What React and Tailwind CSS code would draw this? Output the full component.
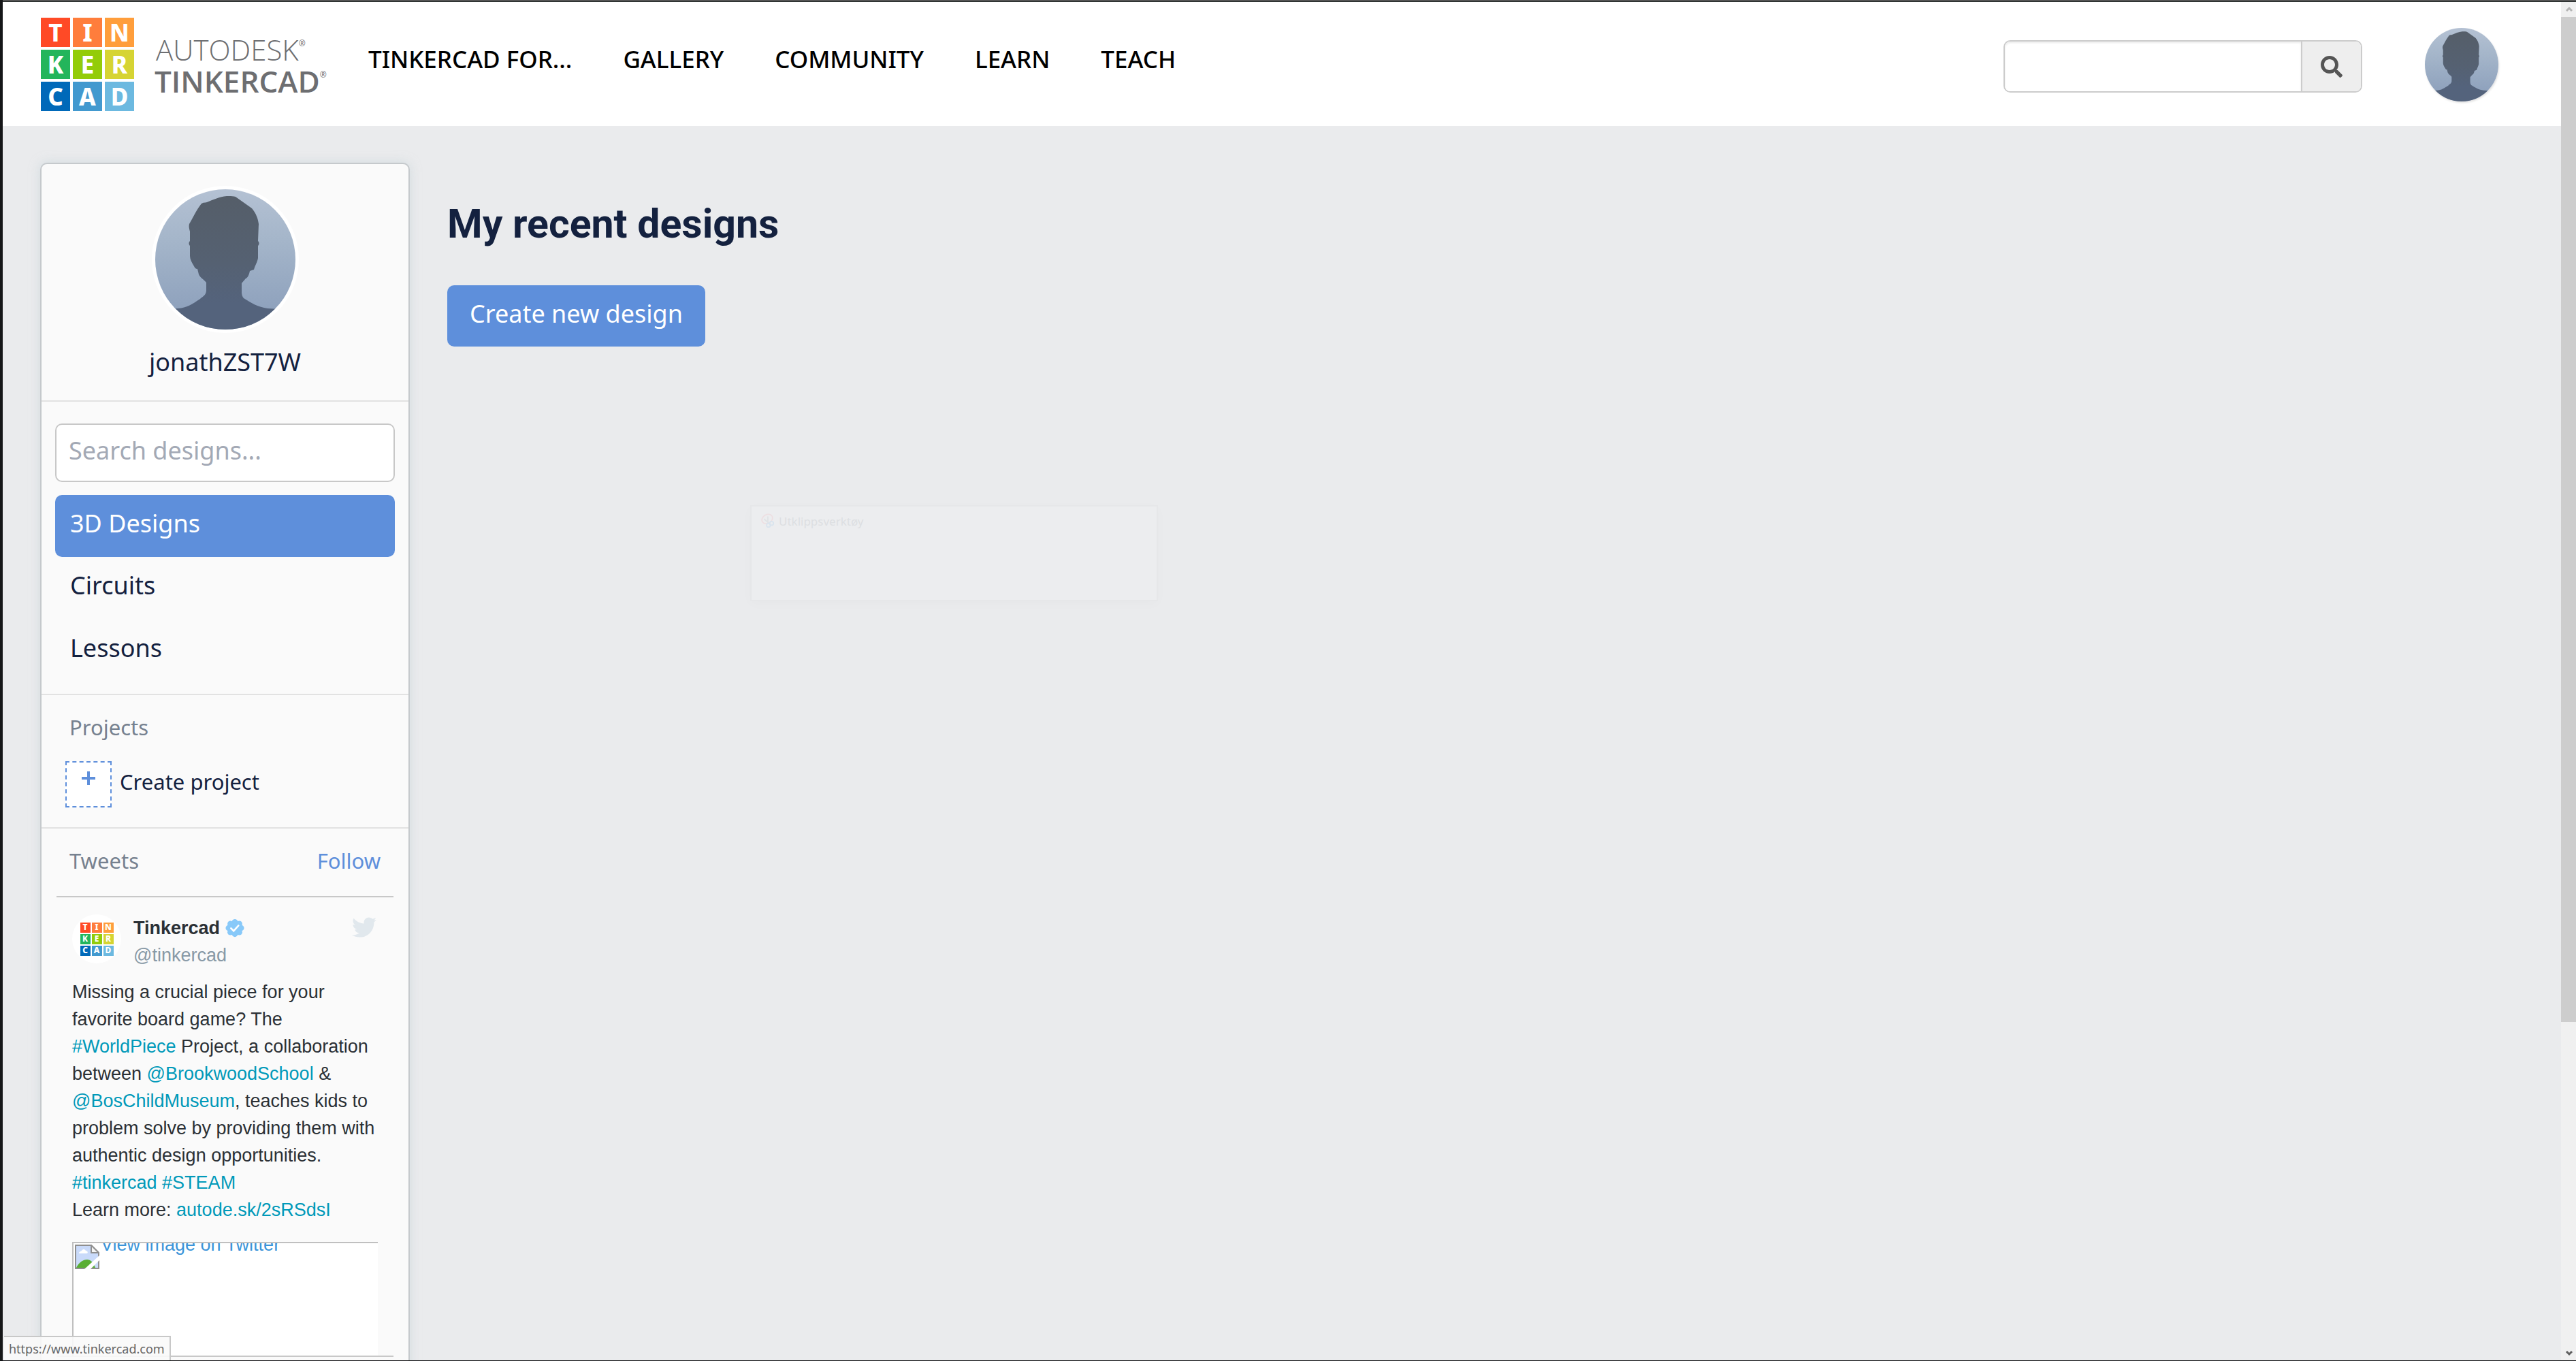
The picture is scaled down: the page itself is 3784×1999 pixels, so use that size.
import React from "react";
import { FaSearch, FaTwitter } from "react-icons/fa";

const SANS = "font-['Noto_Sans','Open_Sans',sans-serif]";
const ARIAL = "font-['Liberation_Sans',Arial,sans-serif]";

const TILES = [
  ["T", "bg-[#ff4a26]"],
  ["I", "bg-[#ff7d3c]"],
  ["N", "bg-[#ff9e3c]"],
  ["K", "bg-[#23b55b]"],
  ["E", "bg-[#93cc09]"],
  ["R", "bg-[#d6d433]"],
  ["C", "bg-[#0069b9]"],
  ["A", "bg-[#4299cf]"],
  ["D", "bg-[#6cb9e0]"],
];

function TileLogo({ grid, tile }) {
  return (
    <span className={`grid shrink-0 grid-cols-3 ${grid}`}>
      {TILES.map(([letter, color]) => (
        <span key={letter} className={`flex items-center justify-center font-extrabold text-white ${color} ${tile}`}>
          {letter}
        </span>
      ))}
    </span>
  );
}

function Avatar({ id, className }) {
  return (
    <svg viewBox="0 0 206 206" className={`rounded-full ${className}`} role="img" aria-label="User avatar">
      <defs>
        <linearGradient id={`${id}-sky`} x1="0" y1="0" x2="0" y2="1">
          <stop offset="0" stopColor="#b4c1d3" />
          <stop offset="0.35" stopColor="#a5b6ca" />
          <stop offset="0.85" stopColor="#8fa2bd" />
        </linearGradient>
        <linearGradient id={`${id}-body`} x1="0" y1="0" x2="0" y2="1">
          <stop offset="0" stopColor="#555e69" />
          <stop offset="0.5" stopColor="#556172" />
          <stop offset="0.8" stopColor="#54637c" />
        </linearGradient>
      </defs>
      <rect width="206" height="206" fill={`url(#${id}-sky)`} />
      <path
        fill={`url(#${id}-body)`}
        d="M108 10c4 0 7 0 10 1 8 6 16 11 24 17 6 7 9 15 10 23l-1 25c2 2 2 5 0 7v18c-1 6-4 10-6 17l-6 2c-1 5-3 10-6 11l-6 7v13c0 4 1 7 3 9 11 7 21 13 35 15l17 1v30H18v-30l16-1c12-1 20-6 32-14 4-4 9-5 9-13v-11c-4-5-9-7-11-12l-2-8c-3 0-4-2-5-4-3-5-6-10-6-15V83c-2-2-2-5 0-7V62c-1-4-2-7-1-11 6-10 10-20 18-30 3-2 5-1 8-2 10-4 18-8 29-9z"
      />
    </svg>
  );
}

function VerifiedBadge() {
  return (
    <svg viewBox="0 0 64 64" className="size-7" role="img" aria-label="Verified account">
      <g fill="#88c9f9">
        <circle cx="32" cy="32" r="23" />
        <circle cx="32" cy="12" r="10" />
        <circle cx="32" cy="52" r="10" />
        <circle cx="11" cy="32" r="10" />
        <circle cx="53" cy="32" r="10" />
        <circle cx="17" cy="18" r="10" />
        <circle cx="47" cy="18" r="10" />
        <circle cx="17" cy="46" r="10" />
        <circle cx="47" cy="46" r="10" />
      </g>
      <path d="M19 33l9 9 16-18" fill="none" stroke="#fff" strokeWidth="6" strokeLinecap="round" />
    </svg>
  );
}

function BrokenImage() {
  return (
    <svg viewBox="0 0 36 36" className="size-9 shrink-0" aria-hidden="true">
      <path d="M1 1h23l11 11v23H1z" fill="#c9dafa" stroke="#8f8f8f" strokeWidth="2" />
      <path d="M6 13c0-3 3-3 4-4 2-3 5-2 6 0 3 0 4 4 1 4z" fill="#fff" />
      <path d="M2 34c4-8 10-12 16-12 5 0 9 4 12 12z" fill="#5aae35" />
      <path d="M24 1v11h11z" fill="#f4f4f4" stroke="#8f8f8f" strokeWidth="2" />
      <path d="M14 36L36 16v7L23 36z" fill="#fff" />
    </svg>
  );
}

const NAV = ["TINKERCAD FOR...", "GALLERY", "COMMUNITY", "LEARN", "TEACH"];

function Header() {
  return (
    <header className="flex h-[182px] items-start bg-white pl-14">
      <a href="#home" className="mt-[23px] flex shrink-0 items-start">
        <TileLogo grid="gap-1" tile="size-[43px] text-[35px] leading-none" />
        <span className="ml-[30px] mt-6 flex w-[258px] flex-col text-[#6d6e71]">
          <span className="flex items-start pl-0.5 font-['Open_Sans',sans-serif] text-[42px] leading-[46px] font-light">
            AUTODESK<sup className="top-0 mt-2 text-xs leading-none font-normal">®</sup>
          </span>
          <span className="flex items-start font-['Open_Sans',sans-serif] text-[44px] leading-[46px] font-semibold">
            TINKERCAD<sup className="top-0 mt-2 text-xs leading-none font-normal">®</sup>
          </span>
        </span>
      </a>
      <nav className="mt-[60px] ml-14 flex gap-[75px] text-[35px] leading-[48px] font-medium text-black">
        {NAV.map((item) => (
          <a key={item} href="#nav" className="whitespace-nowrap">
            {item}
          </a>
        ))}
      </nav>
      <form className="mt-14 ml-auto flex h-[77px] w-[527px] rounded-[10px] border-2 border-[#ccc]" onSubmit={(e) => e.preventDefault()}>
        <input
          type="text"
          aria-label="Search Tinkercad"
          className="min-w-0 flex-1 rounded-l-lg bg-white px-5 text-3xl shadow-[inset_0_2px_3px_rgba(0,0,0,0.09)] outline-none"
        />
        <button type="submit" aria-label="Search" className="flex w-[88px] items-center justify-center rounded-r-lg border-l-2 border-[#ccc] bg-[#eee] text-[#555]">
          <FaSearch className="size-8" />
        </button>
      </form>
      <button type="button" aria-label="Account" className="mt-[38px] mr-[92px] ml-[92px] rounded-full shadow-[1px_2px_3px_rgba(0,0,0,0.12)]">
        <Avatar id="account" className="size-[108px]" />
      </button>
    </header>
  );
}

function Hash({ children }) {
  return (
    <a href="#tweet" className="text-[#0099b9]">
      {children}
    </a>
  );
}

function Tweet() {
  return (
    <article className={`px-[23px] pt-[25px] text-[27px] text-[#2b3035] ${ARIAL}`}>
      <div className="flex items-start">
        <span className={`flex size-[72px] shrink-0 items-center justify-center rounded-full bg-white ${SANS}`}>
          <TileLogo grid="gap-0.5" tile="size-[15px] text-xs leading-none" />
        </span>
        <div className="ml-[18px] leading-10">
          <div className="flex items-center gap-2 font-bold">
            Tinkercad <VerifiedBadge />
          </div>
          <div className="text-[#8899a6]">@tinkercad</div>
        </div>
        <FaTwitter className="mt-px mr-0.5 ml-auto size-9 text-[#e1e8ed]" />
      </div>
      <p className="mt-[14px] leading-10">
        Missing a crucial piece for your
        <br />
        favorite board game? The
        <br />
        <Hash>#WorldPiece</Hash> Project, a collaboration
        <br />
        between <Hash>@BrookwoodSchool</Hash> &amp;
        <br />
        <Hash>@BosChildMuseum</Hash>, teaches kids to
        <br />
        problem solve by providing them with
        <br />
        authentic design opportunities.
        <br />
        <Hash>#tinkercad</Hash> <Hash>#STEAM</Hash>
        <br />
        Learn more: <Hash>autode.sk/2sRSdsI</Hash>
      </p>
      <a href="#photo" className="mt-[27px] flex h-[167px] items-start overflow-hidden border-t-2 border-l-2 border-[#c0c0c0] bg-white pt-0.5 pl-0.5 text-[#3b94d9]">
        <BrokenImage />
        <span className="-mt-4 ml-0.5 leading-8">View image on Twitter</span>
      </a>
    </article>
  );
}

function Sidebar() {
  return (
    <aside className="w-[543px] shrink-0 rounded-t-[10px] border-2 border-b-0 border-[#c5c9cc] bg-[#fafafa] text-[#14213f] shadow-[0_0_16px_rgba(190,205,212,0.55)]">
      <section className="flex flex-col items-center border-b-2 border-[#e2e2e2] pt-8">
        <Avatar id="profile" className="size-[216px] border-[5px] border-white" />
        <h2 className="mt-[19px] mb-8 text-4xl leading-[48px]">jonathZST7W</h2>
      </section>
      <section className="border-b-2 border-[#e2e2e2] px-5 pt-8 pb-[19px] text-4xl">
        <input
          type="text"
          placeholder="Search designs..."
          aria-label="Search designs"
          className="mb-[19px] h-[86px] w-full rounded-[10px] border-2 border-[#c8c8c8] bg-white px-[18px] pb-2 placeholder:text-[#a3a9b5]"
        />
        <nav className="flex flex-col">
          <a href="#3d" className="h-[91px] rounded-[10px] bg-[#5e8fdb] px-[22px] leading-[84px] text-white">
            3D Designs
          </a>
          <a href="#circuits" className="h-[91px] px-[22px] leading-[84px]">
            Circuits
          </a>
          <a href="#lessons" className="h-[91px] px-[22px] leading-[86px]">
            Lessons
          </a>
        </nav>
      </section>
      <section className="border-b-2 border-[#e2e2e2] px-[35px] pt-[27px] pb-[29px] text-[31px] leading-10">
        <h3 className="pl-1.5 text-[#76818f]">Projects</h3>
        <button type="button" className="mt-[30px] flex items-start">
          <span className="flex size-[68px] items-start justify-center border-2 border-dashed border-[#5e8fdb] bg-white pt-3 text-[#5e8fdb]">
            <svg viewBox="0 0 22 22" className="size-[22px]" aria-hidden="true">
              <path d="M11 1v20M1 11h20" stroke="currentColor" strokeWidth="4" />
            </svg>
          </span>
          <span className="mt-2.5 ml-3">Create project</span>
        </button>
      </section>
      <section className="px-[22px] pt-[27px]">
        <div className="flex justify-between border-b-2 border-[#c8c8c8] px-[19px] pb-8 text-[31px] leading-10">
          <h3 className="text-[#76818f]">Tweets</h3>
          <a href="#follow" className="text-[#5e8fdb]">
            Follow
          </a>
        </div>
        <Tweet />
        <hr className="border-t-2 border-[#c8c8c8]" />
        <div className="h-10" />
      </section>
    </aside>
  );
}

function SnipGhost() {
  return (
    <div className="absolute top-[742px] left-[1098px] flex h-[141px] w-[599px] items-start gap-1.5 border-2 border-[#e6e7e9] bg-[#ecedef] px-3 pt-2 text-[#dddfe2] shadow-[0_4px_16px_rgba(0,0,0,0.02)]">
      <svg viewBox="0 0 24 24" className="mt-0.5 size-[22px]" fill="none" strokeWidth="2" aria-hidden="true">
        <ellipse cx="12" cy="9" rx="9" ry="7" stroke="#eddfe2" transform="rotate(-30 12 9)" />
        <path d="M7 9l7 6M13 5v10" stroke="#e0e3e5" />
        <circle cx="14" cy="19" r="3" stroke="#d9e4ee" />
        <circle cx="19" cy="16" r="3" stroke="#d9e4ee" />
      </svg>
      <span className="text-[17px] leading-7">Utklippsverktøy</span>
    </div>
  );
}

function Scrollbar() {
  return (
    <div className="flex w-[22px] shrink-0 flex-col bg-[#f0f0f0]" aria-hidden="true">
      <svg viewBox="0 0 22 22" className="size-[22px]" fill="none" stroke="#b5b5b5" strokeWidth="3">
        <path d="M8 13l4-4 4 4" />
      </svg>
      <div className="h-[74%] bg-[#cdcdcd]" />
      <svg viewBox="0 0 22 22" className="mt-auto size-[22px]" fill="none" stroke="#606060" strokeWidth="3">
        <path d="M8 9l4 4 4-4" />
      </svg>
    </div>
  );
}

export default function App() {
  return (
    <div className={`relative flex h-screen flex-col overflow-hidden border-b border-l-4 border-b-[#111214] border-l-[#151618] bg-[#eaebed] ${SANS}`}>
      <div className="h-[3px] shrink-0 border-b border-[#222826] bg-[#555]" />
      <div className="flex min-h-0 flex-1">
        <div className="min-w-0 flex-1">
          <Header />
          <div className="flex items-start pt-[54px] pl-[55px]">
            <Sidebar />
            <main className="ml-[55px] pt-[52px]">
              <h1 className="font-['Roboto',sans-serif] text-[59px] leading-[76px] font-bold text-[#14213f]">My recent designs</h1>
              <button type="button" className="mt-[52px] h-[90px] rounded-[10px] bg-[#5e8fdb] px-[33px] pb-1.5 text-4xl text-white">
                Create new design
              </button>
            </main>
          </div>
        </div>
        <Scrollbar />
      </div>
      <SnipGhost />
      <div className="absolute bottom-0 left-0.5 border-t-2 border-r-2 border-[#c8c8c8] bg-[#fafafa]/90 px-[7px] text-lg leading-[34px] text-[#666]">
        https://www.tinkercad.com
      </div>
    </div>
  );
}
